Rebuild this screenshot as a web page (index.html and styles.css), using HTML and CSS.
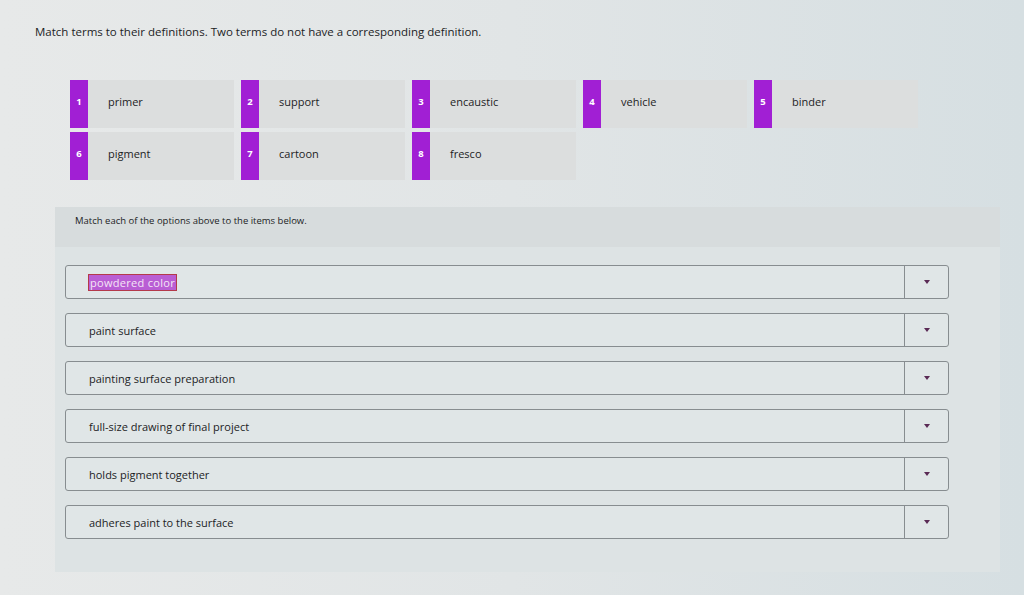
FILE: index.html
```html
<!DOCTYPE html>
<html lang="en">
<head>
<meta charset="utf-8">
<title>Match terms</title>
<link rel="stylesheet" href="styles.css">
</head>
<body>
<main class="page">
  <p class="prompt">Match terms to their definitions. Two terms do not have a corresponding definition.</p>

  <div class="terms">
    <div class="term"><span class="num">1</span><span class="label">primer</span></div>
    <div class="term"><span class="num">2</span><span class="label">support</span></div>
    <div class="term"><span class="num">3</span><span class="label">encaustic</span></div>
    <div class="term"><span class="num">4</span><span class="label">vehicle</span></div>
    <div class="term"><span class="num">5</span><span class="label">binder</span></div>
    <div class="term"><span class="num">6</span><span class="label">pigment</span></div>
    <div class="term"><span class="num">7</span><span class="label">cartoon</span></div>
    <div class="term"><span class="num">8</span><span class="label">fresco</span></div>
  </div>

  <section class="panel">
    <p class="instructions">Match each of the options above to the items below.</p>
    <div class="rows">
      <div class="select"><span class="text"><span class="selected">powdered color</span></span><span class="toggle"><i class="arrow"></i></span></div>
      <div class="select"><span class="text">paint surface</span><span class="toggle"><i class="arrow"></i></span></div>
      <div class="select"><span class="text">painting surface preparation</span><span class="toggle"><i class="arrow"></i></span></div>
      <div class="select"><span class="text">full-size drawing of final project</span><span class="toggle"><i class="arrow"></i></span></div>
      <div class="select"><span class="text">holds pigment together</span><span class="toggle"><i class="arrow"></i></span></div>
      <div class="select"><span class="text">adheres paint to the surface</span><span class="toggle"><i class="arrow"></i></span></div>
    </div>
  </section>
</main>
</body>
</html>
```

FILE: styles.css
```css
* { box-sizing: border-box; }

html, body {
  margin: 0;
  height: 100%;
}

body {
  background: linear-gradient(90deg, #e7e9e9 0%, #e1e5e6 50%, #d6dfe2 100%);
  font-family: "Open Sans", Lato, "Liberation Sans", sans-serif;
  color: #1c1d1f;
  overflow: hidden;
}

.page {
  padding: 25px 0 0 35px;
}

.prompt {
  margin: 0;
  font-size: 11.5px;
  line-height: 14px;
}

.terms {
  margin: 41px 0 0 35px;
  display: grid;
  grid-template-columns: repeat(5, 164px);
  grid-auto-rows: 48px;
  column-gap: 7px;
  row-gap: 4px;
}

.term {
  display: flex;
  align-items: center;
  background: #dcdede;
}

.num {
  width: 18px;
  align-self: stretch;
  display: flex;
  align-items: center;
  justify-content: center;
  padding-bottom: 6px;
  background: #a11fd4;
  color: #fff;
  font-size: 9.5px;
  font-weight: 700;
}

.label {
  padding: 0 0 6px 20px;
  font-size: 11px;
}

.panel {
  margin: 27px 0 0 20px;
  width: 945px;
  height: 365px;
  background: linear-gradient(180deg, #d7dcdd 0, #d7dcdd 40px, #dde3e4 40px, #dde3e4 100%);
  padding: 8px 0 0 10px;
}

.instructions {
  margin: 0 0 0 10px;
  font-size: 9.5px;
  line-height: 12px;
}

.rows {
  margin-top: 38px;
  display: flex;
  flex-direction: column;
  gap: 14px;
}

.select {
  width: 884px;
  height: 34px;
  display: flex;
  border: 1px solid #878d90;
  border-radius: 3px;
  background: #e0e6e7;
}

.text {
  flex: 1;
  display: flex;
  align-items: center;
  padding-left: 23px;
  font-size: 11px;
}

.selected {
  background: #b95ed4;
  color: #f4e6f6;
  outline: 1px solid #b43a4a;
  padding: 0 1px;
  letter-spacing: 0.3px;
}

.toggle {
  width: 44px;
  border-left: 1px solid #878d90;
  display: flex;
  align-items: center;
  justify-content: center;
}

.arrow {
  width: 0;
  height: 0;
  border-left: 3.5px solid transparent;
  border-right: 3.5px solid transparent;
  border-top: 4px solid #5a2a55;
}
```
